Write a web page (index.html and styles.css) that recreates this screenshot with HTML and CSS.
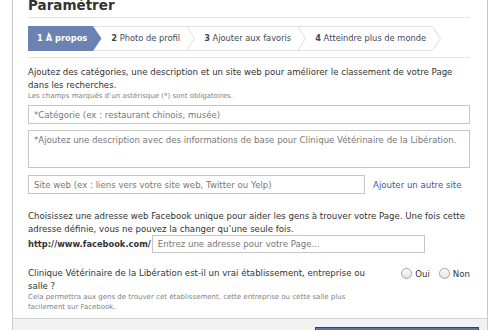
FILE: index.html
```html
<!DOCTYPE html>
<html lang="fr">
<head>
  <meta charset="UTF-8">
  <title>Paramétrer</title>
  <link rel="stylesheet" href="styles.css">
</head>
<body>

  <div class="dialog">
    <h2 class="title">Paramétrer</h2>

    <div class="steps-wrap">
      <ol class="steps">
        <li class="step active">
          <span class="label">1 À propos</span>
          <svg class="chev" width="9" height="25" viewBox="0 0 9 25">
            <line x1="0" y1="0.5" x2="9" y2="0.5" stroke="#e1e1e1"/>
            <line x1="0" y1="24.5" x2="9" y2="24.5" stroke="#e1e1e1"/>
            <polygon points="0,0 8.5,12.5 0,25" fill="#6c82b3"/>
          </svg>
        </li>
        <li class="step">
          <span class="label"><b>2</b> Photo de profil</span>
          <svg class="chev" width="9" height="25" viewBox="0 0 9 25">
            <line x1="0" y1="0.5" x2="9" y2="0.5" stroke="#e1e1e1"/>
            <line x1="0" y1="24.5" x2="9" y2="24.5" stroke="#e1e1e1"/>
            <polyline points="0.5,0 8.5,12.5 0.5,25" fill="none" stroke="#dcdcdc"/>
          </svg>
        </li>
        <li class="step">
          <span class="label"><b>3</b> Ajouter aux favoris</span>
          <svg class="chev" width="9" height="25" viewBox="0 0 9 25">
            <line x1="0" y1="0.5" x2="9" y2="0.5" stroke="#e1e1e1"/>
            <line x1="0" y1="24.5" x2="9" y2="24.5" stroke="#e1e1e1"/>
            <polyline points="0.5,0 8.5,12.5 0.5,25" fill="none" stroke="#dcdcdc"/>
          </svg>
        </li>
        <li class="step">
          <span class="label"><b>4</b> Atteindre plus de monde</span>
          <svg class="chev" width="9" height="25" viewBox="0 0 9 25">
            <polyline points="0.5,0.5 8.5,12.5 0.5,24.5" fill="none" stroke="#dcdcdc"/>
          </svg>
        </li>
      </ol>
    </div>

    <div class="section about">
      <p class="intro">Ajoutez des catégories, une description et un site web pour améliorer le classement de votre Page dans les recherches.</p>
      <p class="note">Les champs marqués d’un astérisque (*) sont obligatoires.</p>
      <input class="field" type="text" placeholder="*Catégorie (ex : restaurant chinois, musée)">
      <textarea class="field area" placeholder="*Ajoutez une description avec des informations de base pour Clinique Vétérinaire de la Libération."></textarea>
      <div class="row site-row">
        <input class="field site" type="text" placeholder="Site web (ex : liens vers votre site web, Twitter ou Yelp)">
        <a class="link" href="#">Ajouter un autre site</a>
      </div>
    </div>

    <div class="section address">
      <p class="intro">Choisissez une adresse web Facebook unique pour aider les gens à trouver votre Page. Une fois cette adresse définie, vous ne pouvez la changer qu’une seule fois.</p>
      <div class="row url-row">
        <b class="prefix">http://www.facebook.com/</b>
        <input class="field url" type="text" placeholder="Entrez une adresse pour votre Page...">
      </div>
    </div>

    <div class="section question">
      <div class="q-text">
        <p class="intro">Clinique Vétérinaire de la Libération est-il un vrai établissement, entreprise ou salle ?</p>
        <p class="note">Cela permettra aux gens de trouver cet établissement, cette entreprise ou cette salle plus facilement sur Facebook.</p>
      </div>
      <div class="radios">
        <label class="choice"><span class="radio"></span>Oui</label>
        <label class="choice"><span class="radio"></span>Non</label>
      </div>
    </div>

    <div class="footer">
      <button class="btn" aria-label="Enregistrer les informations"></button>
    </div>
  </div>

</body>
</html>
```

FILE: styles.css
```css
body {
  margin: 0;
  background: #fff;
  font-family: "DejaVu Sans", sans-serif;
  font-size: 8.6px;
  color: #333;
  overflow: hidden;
}

.dialog {
  margin-left: 12px;
  width: 474px;
  border-left: 1px solid #c9c9c9;
  border-right: 1px solid #c9c9c9;
}

.title {
  margin: -4px 17px 0 15px;
  padding-bottom: 3px;
  font-size: 13.5px;
  line-height: 18px;
  font-weight: bold;
  color: #333;
  border-bottom: 1px solid #e3e3e3;
}

.steps-wrap {
  margin: 0 17px 0 15px;
  padding: 8px 0 6px;
  border-bottom: 1px solid #e3e3e3;
}

.steps {
  display: flex;
  margin: 0;
  padding: 0;
  list-style: none;
  height: 25px;
}

.step {
  display: flex;
}

.label {
  display: block;
  height: 23px;
  line-height: 23px;
  padding: 0 6px 0 9px;
  border-top: 1px solid #e1e1e1;
  border-bottom: 1px solid #e1e1e1;
  color: #444950;
  white-space: nowrap;
  font-size: 8.3px;
}

.step.active .label {
  background: #6c82b3;
  border-color: #6c82b3;
  color: #fff;
  font-weight: bold;
}

.chev {
  display: block;
}

.section {
  margin: 0 17px 0 15px;
}

.section p {
  margin: 0;
}

.intro {
  line-height: 12.5px;
}

.note {
  font-size: 7px;
  line-height: 10px;
  color: #7f7f7f;
}

.about {
  padding-top: 8px;
}

.about .note {
  margin-bottom: 4px;
}

.field {
  display: block;
  box-sizing: border-box;
  width: 100%;
  height: 19px;
  margin: 0;
  padding: 0 5px;
  border: 1px solid #c6c6c6;
  font-family: "DejaVu Sans", sans-serif;
  font-size: 8.6px;
  color: #333;
  background: #fff;
}

.field::placeholder {
  color: #777;
}

.area {
  height: 38px;
  margin-top: 6px;
  padding: 4px 5px;
  resize: none;
}

.row {
  display: flex;
  align-items: center;
}

.site-row {
  margin-top: 7px;
}

.site {
  width: 337px;
}

.link {
  margin-left: 8px;
  color: #3b5998;
  text-decoration: none;
}

.address {
  padding-top: 16px;
}

.prefix {
  color: #333;
  font-size: 8.3px;
  margin-right: 1px;
}

.url {
  width: 273px;
  height: 18px;
}

.question {
  display: flex;
  justify-content: space-between;
  align-items: flex-start;
  padding-top: 14px;
}

.q-text {
  width: 345px;
}

.radios {
  display: flex;
  gap: 9px;
  padding-top: 1px;
}

.choice {
  display: flex;
  align-items: center;
  gap: 3px;
}

.radio {
  width: 11px;
  height: 11px;
  box-sizing: border-box;
  border: 1px solid #a3a3a3;
  border-radius: 50%;
  background: linear-gradient(#fff, #e2e2e2);
}

.footer {
  margin-top: 6px;
  height: 40px;
  border-top: 1px solid #d2d2d2;
  background: #f2f2f2;
  display: flex;
  justify-content: flex-end;
  padding: 8px 8px 0 0;
}

.btn {
  width: 164px;
  height: 24px;
  background: #5b74a8;
  border: 1px solid #29447e;
}
```
